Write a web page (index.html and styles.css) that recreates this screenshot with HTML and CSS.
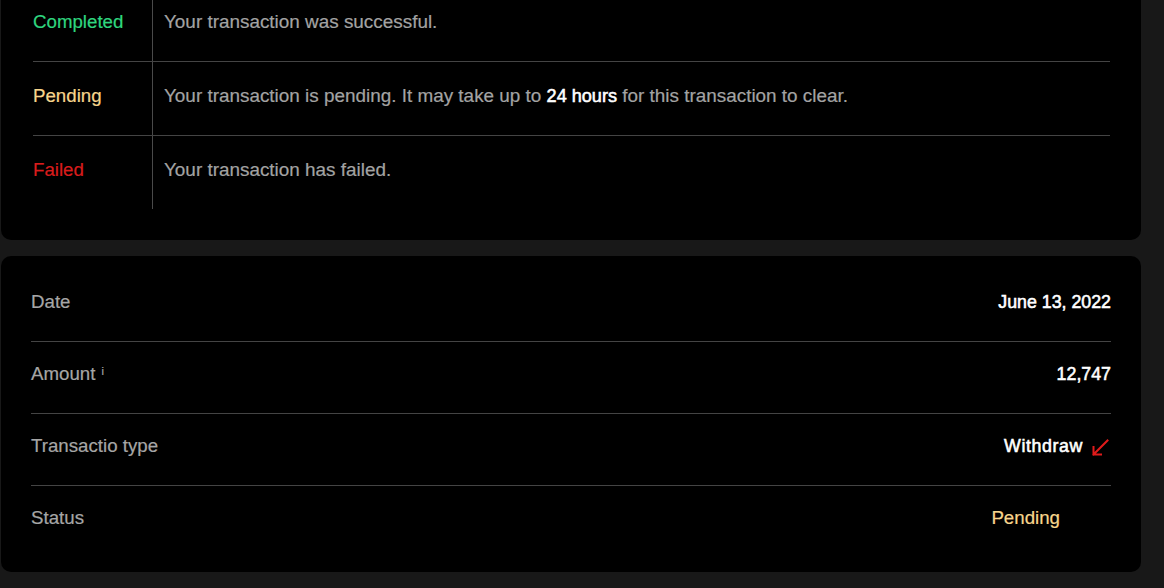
FILE: index.html
```html
<!DOCTYPE html>
<html lang="en">
<head>
<meta charset="utf-8">
<title>Transaction details</title>
<link rel="stylesheet" href="styles.css">
</head>
<body>
<main class="page">
  <section class="card legend">
    <div class="legend-row">
      <div class="legend-key key-completed">Completed</div>
      <div class="legend-desc">Your transaction was successful.</div>
    </div>
    <div class="legend-row">
      <div class="legend-key key-pending">Pending</div>
      <div class="legend-desc">Your transaction is pending. It may take up to <strong class="em">24 hours</strong> for this transaction to clear.</div>
    </div>
    <div class="legend-row">
      <div class="legend-key key-failed">Failed</div>
      <div class="legend-desc">Your transaction has failed.</div>
    </div>
  </section>

  <section class="card details">
    <div class="detail-row">
      <span class="label">Date</span>
      <span class="value">June 13, 2022</span>
    </div>
    <div class="detail-row">
      <span class="label">Amount<sup class="info">i</sup></span>
      <span class="value">12,747</span>
    </div>
    <div class="detail-row">
      <span class="label">Transactio type</span>
      <span class="value">
        <span class="type-text">Withdraw</span>
        <svg class="arrow" width="18" height="18" viewBox="0 0 18 18" aria-hidden="true">
          <path d="M16.5 2.5 L2.5 16.5 M2.5 9 L2.5 16.5 L10 16.5" fill="none" stroke="#e01b1b" stroke-width="2" stroke-linecap="square"/>
        </svg>
      </span>
    </div>
    <div class="detail-row">
      <span class="label">Status</span>
      <span class="value status-pending">Pending</span>
    </div>
  </section>
</main>
</body>
</html>
```

FILE: styles.css
```css
* { box-sizing: border-box; }

html, body {
  margin: 0;
  padding: 0;
  background: #181818;
  overflow: hidden;
}

body {
  font-family: "Liberation Sans", Arial, Helvetica, sans-serif;
  font-size: 18.7px;
  line-height: 24px;
  color: #a3a3a3;
  -webkit-text-stroke: 0.2px currentColor;
}

.page {
  display: flex;
  flex-direction: column;
  gap: 16px;
  width: 1141px;
  padding-left: 1px;
  margin-top: -44px;
}

.card {
  background: #000;
  border-radius: 10px;
}

/* legend card */
.legend {
  padding: 32px 31px 31px 32px;
}

.legend-row {
  display: grid;
  grid-template-columns: 120px 1fr;
  border-bottom: 1px solid #444;
}

.legend-row:last-child {
  border-bottom: none;
}

.legend-key {
  padding: 22px 0 27px;
  border-right: 1px solid #4a4a4a;
}

.legend-desc {
  padding: 22px 0 27px 11px;
  font-size: 18.9px;
  color: #a3a3a3;
}

.key-completed { color: #2fd67f; }
.key-pending { color: #f7d58c; }
.key-failed { color: #d91c1c; }

.em {
  color: #fff;
  font-weight: 400;
  font-size: 18.1px;
  -webkit-text-stroke: 0.55px #fff;
}

/* details card */
.details {
  padding: 14px 30px 15px;
}

.detail-row {
  display: flex;
  justify-content: space-between;
  align-items: center;
  padding: 20px 0 27px;
  border-bottom: 1px solid #444;
}

.detail-row:last-child {
  border-bottom: none;
}

.label {
  color: #a6a6a6;
}

.info {
  font-size: 11px;
  line-height: 0;
  vertical-align: 5px;
  margin-left: 6px;
  color: #a6a6a6;
}

.value {
  color: #fff;
  font-weight: 400;
  font-size: 17.8px;
  -webkit-text-stroke: 0.55px #fff;
  display: flex;
  align-items: center;
  gap: 8px;
}

.type-text {
  letter-spacing: 0.6px;
}

.arrow {
  display: block;
  margin-top: 2px;
  margin-right: 2px;
}

.status-pending {
  color: #f7d58c;
  font-size: 18.7px;
  -webkit-text-stroke: 0.2px #f7d58c;
  margin-right: 51px;
}
```
